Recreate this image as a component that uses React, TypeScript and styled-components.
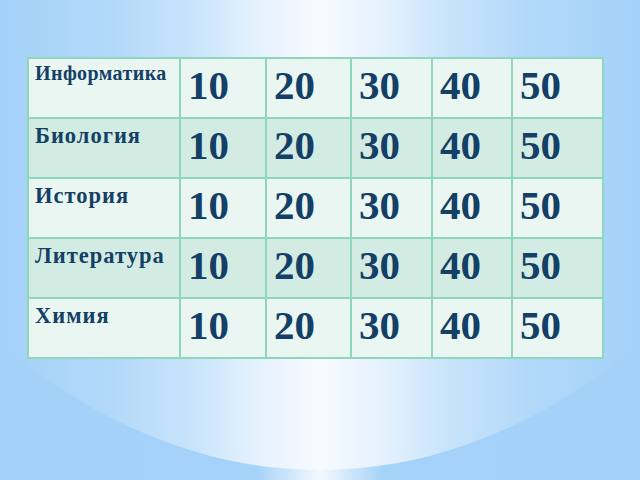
import React from "react";
import styled, { createGlobalStyle } from "styled-components";

const GlobalStyle = createGlobalStyle`
  html, body {
    margin: 0;
    padding: 0;
    background: #a3d1f8;
  }
`;

const subjects = [
  { name: "Информатика", compact: true },
  { name: "Биология", compact: false },
  { name: "История", compact: false },
  { name: "Литература", compact: false },
  { name: "Химия", compact: false },
];
const scores = [10, 20, 30, 40, 50];
const colWidths = [152, 86, 85, 81, 80, 91];

export default function App() {
  return (
    <Page>
      <GlobalStyle />
      <Board>
        <colgroup>
          {colWidths.map((w, i) => (
            <Col key={i} $w={w} />
          ))}
        </colgroup>
        <tbody>
          {subjects.map((s, r) => (
            <Row key={s.name} $alt={r % 2 === 1}>
              <Subject $compact={s.compact}>{s.name}</Subject>
              {scores.map((v) => (
                <Score key={v}>{v}</Score>
              ))}
            </Row>
          ))}
        </tbody>
      </Board>
    </Page>
  );
}

const Page = styled.div`
  position: relative;
  width: 640px;
  height: 480px;
  overflow: hidden;
  box-sizing: border-box;
  padding: 57px 0 0 27px;
  display: flex;
  align-items: flex-start;
  background: linear-gradient(
    90deg,
    #a3d1f8 0%,
    #a5d2f8 40%,
    #f4f9ff 50%,
    #a5d2f8 60%,
    #a3d1f8 100%
  );

  &::before {
    content: "";
    position: absolute;
    inset: 0;
    clip-path: ellipse(760px 1350px at 320px -880px);
    background: linear-gradient(
      90deg,
      #a3d1f8 0%,
      #b3d9f9 18%,
      #c8e4fb 30%,
      #e4f1fd 40%,
      #f7fbff 50%,
      #e4f1fd 60%,
      #c8e4fb 70%,
      #b3d9f9 82%,
      #a3d1f8 100%
    );
  }
`;

const Board = styled.table`
  position: relative;
  z-index: 1;
  border-collapse: collapse;
  table-layout: fixed;
  width: 576px;
  border: 2px solid #92d9c0;
  font-family: "Liberation Serif", "Times New Roman", serif;
  color: #143f66;
`;

const Col = styled.col<{ $w: number }>`
  width: ${(p) => p.$w}px;
`;

const Row = styled.tr<{ $alt: boolean }>`
  height: 60px;
  background: ${(p) => (p.$alt ? "#d3ece3" : "#eaf6f1")};
`;

const Cell = styled.td`
  border: 2px solid #8ed6bc;
  vertical-align: top;
  padding: 0;
  box-sizing: border-box;
`;

const Subject = styled(Cell).attrs({ as: "th" })<{ $compact: boolean }>`
  text-align: left;
  font-weight: bold;
  font-size: ${(p) => (p.$compact ? 20 : 22.5)}px;
  letter-spacing: ${(p) => (p.$compact ? 0.4 : 1)}px;
  line-height: 1.15;
  white-space: nowrap;
  padding: ${(p) => (p.$compact ? 3 : 4)}px 0 0 6px;
`;

const Score = styled(Cell)`
  font-weight: bold;
  font-size: 41px;
  line-height: 1;
  padding: 6px 0 0 7px;
`;
